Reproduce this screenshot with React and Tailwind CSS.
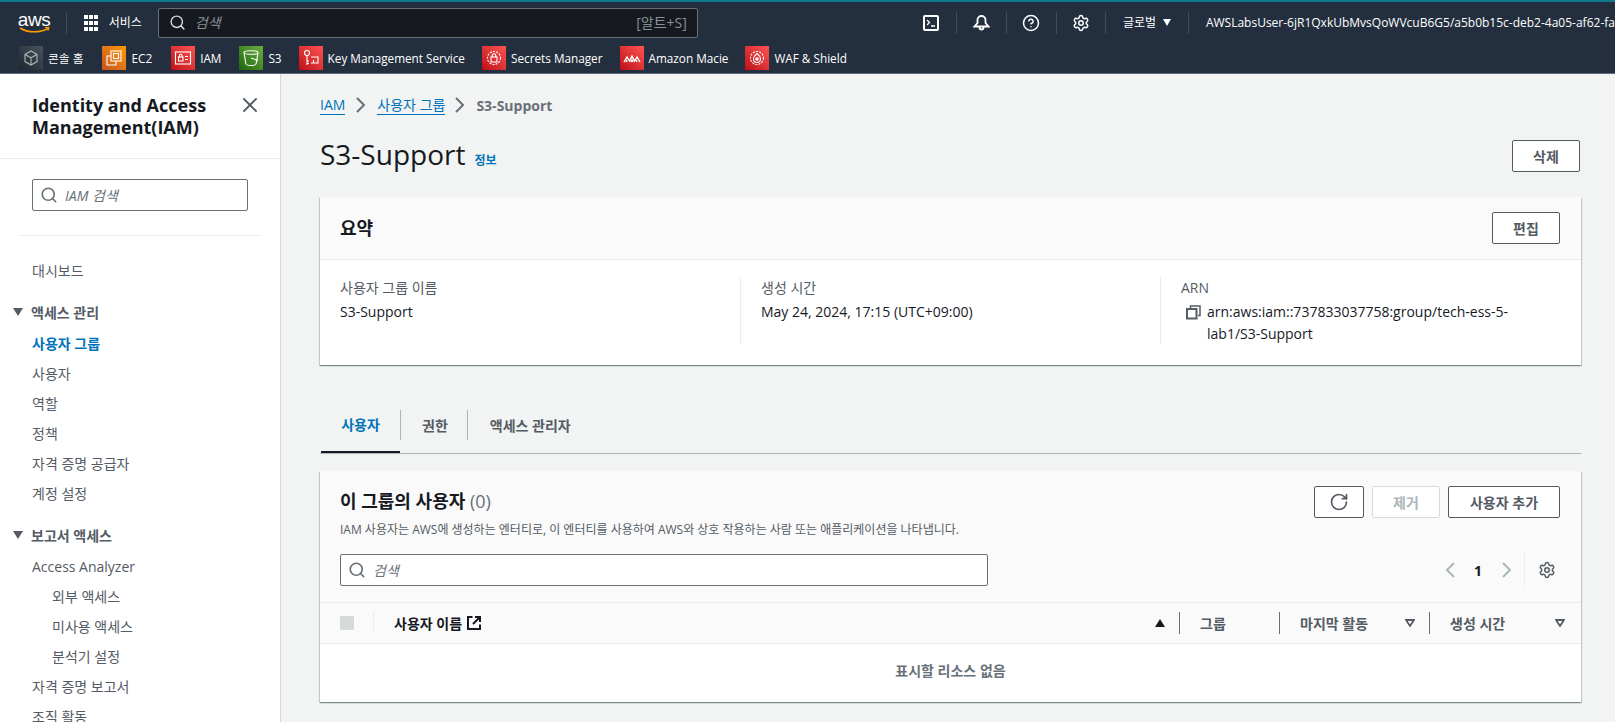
import React from "react";
import { Search, X, RotateCw, Settings, CircleHelp } from "lucide-react";

const FONT = "font-['Open_Sans','Noto_Sans_CJK_KR',sans-serif]";

const Box = ({ tile, children }) => (
  <span className={`flex h-6 w-6 shrink-0 items-center justify-center ${tile}`}>
    <svg width="20" height="20" viewBox="0 0 20 20" fill="none" stroke="white" strokeWidth="1.1">
      {children}
    </svg>
  </span>
);

const favorites = [
  {
    label: "콘솔 홈",
    gap: "mr-[19px]",
    tile: "bg-linear-to-tr from-[#20262e] to-[#4a525c]",
    icon: <path d="M10 3l6 3.4v7.2L10 17l-6-3.4V6.4L10 3zM4 6.4l6 3.4 6-3.4M10 9.8V17" stroke="#aab2bb" />,
  },
  {
    label: "EC2",
    gap: "mr-[19px]",
    tile: "bg-linear-to-tr from-[#c8511b] to-[#f90]",
    icon: (
      <>
        <rect x="7" y="3" width="10" height="10" />
        <rect x="9.5" y="5.5" width="5" height="5" />
        <path d="M7 8H3v9h9v-4" />
      </>
    ),
  },
  {
    label: "IAM",
    gap: "mr-[18px]",
    tile: "bg-linear-to-tr from-[#bd0816] to-[#ff5252]",
    icon: (
      <>
        <rect x="2.5" y="4" width="15" height="12" />
        <rect x="5.5" y="9" width="4.5" height="4" />
        <path d="M6.5 9V7.5a1.2 1.2 0 012.5 0V9M12 8.5h3M12 11.5h3" />
      </>
    ),
  },
  {
    label: "S3",
    gap: "mr-[17px]",
    tile: "bg-linear-to-tr from-[#1b660f] to-[#6cae3e]",
    icon: (
      <>
        <ellipse cx="10" cy="4.5" rx="7" ry="1.8" />
        <path d="M3 4.5l1.8 11c.2 1.2 2.5 2 5.2 2s5-.8 5.2-2L17 4.5M10 10l7 2.5" />
      </>
    ),
  },
  {
    label: "Key Management Service",
    gap: "mr-[17px]",
    tile: "bg-linear-to-tr from-[#bd0816] to-[#ff5252]",
    icon: (
      <>
        <circle cx="6" cy="5" r="2.5" />
        <path d="M6 7.5V17M6 13h2M6 15.5h2M10 9h7v6h-7M12.5 12v3" />
      </>
    ),
  },
  {
    label: "Secrets Manager",
    gap: "mr-[17px]",
    tile: "bg-linear-to-tr from-[#bd0816] to-[#ff5252]",
    icon: (
      <>
        <circle cx="10" cy="10" r="6.5" strokeDasharray="2 1.2" />
        <rect x="7" y="9" width="6" height="5" />
        <path d="M8.2 9V7.5a1.8 1.8 0 013.6 0V9" />
      </>
    ),
  },
  {
    label: "Amazon Macie",
    gap: "mr-[17px]",
    tile: "bg-linear-to-tr from-[#bd0816] to-[#ff5252]",
    icon: <path d="M2 14l3-5 2.5 4L10 8l2.5 5L15 9l3 5M4 14l1.2-2M9 14l1-2 1 2M15 14l-.8-2" strokeWidth="1.4" />,
  },
  {
    label: "WAF & Shield",
    gap: "",
    tile: "bg-linear-to-tr from-[#bd0816] to-[#ff5252]",
    icon: (
      <>
        <circle cx="10" cy="10" r="6.5" strokeDasharray="2 1.2" />
        <path d="M10 5.5c2.5 2 3.5 3.500 3.500 5.500a3.500 3.500 0 01-7 0c0-2 1-3.500 3.500-5.500z" />
        <circle cx="10" cy="11" r="1.2" fill="white" />
      </>
    ),
  },
];

const Chevron = ({ left, className = "" }) => (
  <svg className={className} width="10" height="16" viewBox="0 0 10 16" fill="none" stroke="currentColor" strokeWidth="2">
    <path d={left ? "M9 1L2 8l7 7" : "M1 1l7 7-7 7"} />
  </svg>
);

const TopBar = () => (
  <header className="h-[74px] shrink-0 border-t-2 border-b border-t-[#0f7a8c] border-b-[#5f6b7a] bg-[#232f3e] text-white">
    <div className="flex h-[41px] items-center">
      <div className="ml-[18px] flex w-[32px] flex-col items-center">
        <span className="text-[19px] leading-[15px] font-normal tracking-[-0.5px] font-['Liberation_Sans',sans-serif]">aws</span>
        <svg width="31" height="7" viewBox="0 0 31 7" fill="none">
          <path d="M1 1c8 5 20 5 28 .5" stroke="#f90" strokeWidth="1.6" />
          <path d="M26 .6l4-.4-1 3.400" stroke="#f90" strokeWidth="1.200" />
        </svg>
      </div>
      <span className="ml-[16px] h-[22px] w-px bg-[#414d5c]" />
      <div className="ml-[17px] grid grid-cols-3 gap-[2px]">
        {Array.from({ length: 9 }).map((_, i) => (
          <span key={i} className="h-1 w-1 bg-white" />
        ))}
      </div>
      <span className="ml-[12px] text-[12px] whitespace-nowrap">서비스</span>
      <div className="ml-[16px] flex h-[30px] w-[540px] shrink-0 items-center rounded-[2px] border border-[#687078] bg-[#16191f] pr-[10px] pl-[10px]">
        <Search size={17} strokeWidth={2} className="text-[#d5dbdb]" />
        <span className="ml-[9px] grow text-[14px] text-[#879196] italic">검색</span>
        <span className="text-[14px] text-[#879196]">[알트+S]</span>
      </div>
      <div className="ml-[225px] flex h-[16px] w-[16px] shrink-0 items-center justify-center rounded-[2px] border-2 border-white">
        <svg width="10" height="10" viewBox="0 0 10 10" fill="none" stroke="white" strokeWidth="1.300">
          <path d="M1 2l2.500 2.500L1 7M5 8h4" />
        </svg>
      </div>
      <span className="ml-[17px] h-[22px] w-px bg-[#414d5c]" />
      <svg className="ml-[16px] shrink-0" width="17" height="17" viewBox="0 0 17 17" fill="none" stroke="white" strokeWidth="1.800">
        <path d="M1.500 12.500h14L12.500 9V6a4 4 0 00-8 0v3l-3 3.500zM6.500 13.500a2 2 0 004 0" />
      </svg>
      <span className="ml-[16px] h-[22px] w-px bg-[#414d5c]" />
      <CircleHelp size={18} strokeWidth={2} className="ml-[16px] shrink-0" />
      <span className="ml-[16px] h-[22px] w-px bg-[#414d5c]" />
      <Settings size={18} strokeWidth={2} className="ml-[15px] shrink-0" />
      <span className="ml-[15px] h-[22px] w-px bg-[#414d5c]" />
      <span className="ml-[17px] text-[12px] whitespace-nowrap">글로벌</span>
      <span className="ml-[7px] h-0 w-0 border-x-[4.500px] border-t-[7px] border-x-transparent border-t-white" />
      <span className="ml-[17px] h-[22px] w-px bg-[#414d5c]" />
      <span className="ml-[17px] text-[12px] whitespace-nowrap">AWSLabsUser-6jR1QxkUbMvsQoWVcuB6G5/a5b0b15c-deb2-4a05-af62-fa</span>
    </div>
    <div className="flex h-[30px] items-start pt-[3px] pl-[19px]">
      {favorites.map((f) => (
        <div key={f.label} className={`flex items-center gap-[5px] ${f.gap}`}>
          <Box tile={f.tile}>{f.icon}</Box>
          <span className="text-[11.75px] leading-[23px] whitespace-nowrap">{f.label}</span>
        </div>
      ))}
    </div>
  </header>
);

const NavItem = ({ children, active, indent }) => (
  <div
    className={`h-[30px] text-[14px] leading-[30px] whitespace-nowrap ${indent ? "pl-[52px]" : "pl-[32px]"} ${
      active ? "font-bold text-[#0073bb]" : "text-[#545b64]"
    }`}
  >
    {children}
  </div>
);

const NavGroup = ({ children }) => (
  <div className="flex h-[32px] items-center pb-[2px] pl-[13px]">
    <span className="h-0 w-0 border-x-[5px] border-t-[8px] border-x-transparent border-t-[#545b64]" />
    <span className="ml-[8px] text-[14px] font-bold whitespace-nowrap text-[#545b64]">{children}</span>
  </div>
);

const Sidebar = () => (
  <aside className="w-[281px] shrink-0 overflow-hidden border-r border-[#d5dbdb] bg-white">
    <div className="flex h-[85px] items-start justify-between border-b border-[#eaeded] pt-[20px] pr-[18px] pl-[32px]">
      <h2 className="text-[18px] leading-[22px] font-bold text-[#16191f]">
        Identity and Access
        <br />
        Management(IAM)
      </h2>
      <X size={24} strokeWidth={1.800} className="-mt-[1px] text-[#545b64]" />
    </div>
    <div className="px-[32px] pt-[20px]">
      <div className="flex h-[32px] w-[216px] items-center rounded-[2px] border border-[#687078] pl-[7px]">
        <Search size={18} strokeWidth={2.200} className="text-[#687078]" />
        <span className="ml-[7px] text-[14px] text-[#687078] italic">IAM 검색</span>
      </div>
    </div>
    <div className="mx-[20px] mt-[24px] h-px bg-[#eaeded]" />
    <div className="mt-[20px]">
      <NavItem>대시보드</NavItem>
    </div>
    <div className="mt-[11px]">
      <NavGroup>액세스 관리</NavGroup>
      <NavItem active>사용자 그룹</NavItem>
      <NavItem>사용자</NavItem>
      <NavItem>역할</NavItem>
      <NavItem>정책</NavItem>
      <NavItem>자격 증명 공급자</NavItem>
      <NavItem>계정 설정</NavItem>
    </div>
    <div className="mt-[11px]">
      <NavGroup>보고서 액세스</NavGroup>
      <NavItem>Access Analyzer</NavItem>
      <NavItem indent>외부 액세스</NavItem>
      <NavItem indent>미사용 액세스</NavItem>
      <NavItem indent>분석기 설정</NavItem>
      <NavItem>자격 증명 보고서</NavItem>
      <NavItem>조직 활동</NavItem>
    </div>
  </aside>
);

const Button = ({ children, className = "" }) => (
  <button className={`flex h-[32px] items-center justify-center rounded-[2px] border border-[#545b64] bg-white text-[14px] font-bold text-[#545b64] ${className}`}>
    {children}
  </button>
);

const Crumb = ({ children }) => <span className="border-b border-[#0073bb] text-[14px] leading-[18px] text-[#0073bb]">{children}</span>;

const Field = ({ label, children, className = "" }) => (
  <div className={`h-[68px] ${className}`}>
    <div className="text-[14px] leading-[22px] text-[#545b64]">{label}</div>
    <div className="mt-[2px] text-[14px] leading-[22px] text-[#16191f]">{children}</div>
  </div>
);

const Summary = () => (
  <section className="mt-[25px] w-[1261px] bg-white shadow-[0_1px_1px_0_rgba(0,28,36,0.3),1px_1px_1px_0_rgba(0,28,36,0.15),-1px_1px_1px_0_rgba(0,28,36,0.15)]">
    <div className="flex h-[63px] items-center justify-between border-b border-[#eaeded] bg-[#fafafa] pr-[21px] pl-[20px]">
      <h2 className="text-[18px] font-bold text-[#16191f]">요약</h2>
      <Button className="w-[68px]">편집</Button>
    </div>
    <div className="grid h-[105px] grid-cols-[420px_420px_1fr] pt-[17px]">
      <Field label="사용자 그룹 이름" className="pl-[20px]">S3-Support</Field>
      <Field label="생성 시간" className="border-l border-[#eaeded] pl-[20px]">May 24, 2024, 17:15 (UTC+09:00)</Field>
      <Field label="ARN" className="border-l border-[#eaeded] pl-[20px]">
        <div className="flex items-start">
          <svg className="mt-[4px] ml-[5px] shrink-0" width="15" height="15" viewBox="0 0 15 15" fill="none" stroke="#545b64" strokeWidth="2">
            <rect x="1" y="4" width="9.500" height="9.500" />
            <path d="M4.500 3V1h9.500v9.500h-2" strokeWidth="1.500" />
          </svg>
          <span className="ml-[6px] w-[320px]">arn:aws:iam::737833037758:group/tech-ess-5-lab1/S3-Support</span>
        </div>
      </Field>
    </div>
  </section>
);

const Tabs = () => (
  <div className="mt-[44px] flex h-[45px] w-[1261px] items-start border-b border-[#aab7b8] text-[14px] font-bold">
    <div className="ml-px h-[44px] w-[79px] border-b-[2px] border-[#16191f] pt-[1px] text-center leading-[30px] text-[#0073bb]">사용자</div>
    <div className="mt-[1px] flex h-[30px] items-center border-l border-[#aab7b8] pr-[19px] pl-[21px] text-[#545b64]">권한</div>
    <div className="mt-[1px] flex h-[30px] items-center border-l border-[#aab7b8] px-[22px] text-[#545b64]">액세스 관리자</div>
  </div>
);

const SortDown = () => (
  <svg width="10" height="8" viewBox="0 0 10 8" fill="none" stroke="#545b64" strokeWidth="1.800">
    <path d="M1 1h8L5 7z" />
  </svg>
);

const UsersPanel = () => (
  <section className="mt-[17px] w-[1261px] bg-white shadow-[0_1px_1px_0_rgba(0,28,36,0.3),1px_1px_1px_0_rgba(0,28,36,0.15),-1px_1px_1px_0_rgba(0,28,36,0.15)]">
    <div className="h-[131px] bg-[#fafafa] pt-[15px] pr-[21px] pl-[20px]">
      <div className="flex items-start justify-between">
        <div>
          <h2 className="mt-[2px] text-[18px] leading-[26px] font-bold text-[#16191f]">
            이 그룹의 사용자 <span className="font-normal text-[#687078]">(0)</span>
          </h2>
          <p className="mt-[8px] text-[12px] leading-[16px] text-[#545b64]">
            IAM 사용자는 AWS에 생성하는 엔터티로, 이 엔터티를 사용하여 AWS와 상호 작용하는 사람 또는 애플리케이션을 나타냅니다.
          </p>
        </div>
        <div className="flex gap-[8px]">
          <Button className="w-[50px]">
            <RotateCw size={20} strokeWidth={2} />
          </Button>
          <button className="h-[32px] w-[68px] rounded-[2px] border border-[#d5dbdb] bg-white text-[14px] font-bold text-[#aab7b8]">제거</button>
          <Button className="w-[112px]">사용자 추가</Button>
        </div>
      </div>
      <div className="mt-[16px] flex items-center justify-between">
        <div className="flex h-[32px] w-[648px] items-center rounded-[2px] border border-[#687078] bg-white pl-[7px]">
          <Search size={18} strokeWidth={2.200} className="text-[#687078]" />
          <span className="ml-[7px] text-[14px] text-[#687078] italic">검색</span>
        </div>
        <div className="flex h-[32px] items-center text-[#aab7b8]">
          <Chevron left />
          <span className="mr-[20px] ml-[19px] text-[14px] font-bold text-[#16191f]">1</span>
          <Chevron />
          <span className="ml-[12px] h-[32px] w-px bg-[#eaeded]" />
          <Settings size={18} strokeWidth={2} className="mr-[4px] ml-[13px] text-[#545b64]" />
        </div>
      </div>
    </div>
    <div className="grid h-[42px] grid-cols-[1fr_100px_150px_152px] border-y border-[#eaeded] bg-[#fafafa] text-[14px] font-bold text-[#545b64]">
      <div className="flex items-center pl-[20px]">
        <span className="h-[14px] w-[14px] rounded-[1px] bg-[#d5dbdb]" />
        <span className="ml-[19px] h-[22px] w-px bg-[#eaeded]" />
        <span className="ml-[20px] text-[#16191f]">사용자 이름</span>
        <svg className="ml-[5px]" width="14" height="14" viewBox="0 0 14 14" fill="none" stroke="#16191f" strokeWidth="2">
          <path d="M5.500 1H1v12h12V8.500M8 1h5v5M13 1L6 8" />
        </svg>
        <span className="mr-[14px] ml-auto h-0 w-0 border-x-[5px] border-b-[8px] border-x-transparent border-b-[#16191f]" />
      </div>
      <div className="flex items-center">
        <div className="flex h-[22px] w-full items-center border-l border-[#687078] pl-[20px]">그룹</div>
      </div>
      <div className="flex items-center">
        <div className="flex h-[22px] w-full items-center justify-between border-l border-[#687078] pr-[14px] pl-[20px]">
          마지막 활동
          <SortDown />
        </div>
      </div>
      <div className="flex items-center">
        <div className="flex h-[22px] w-full items-center justify-between border-l border-[#687078] pr-[16px] pl-[20px]">
          생성 시간
          <SortDown />
        </div>
      </div>
    </div>
    <div className="flex h-[58px] items-center justify-center pb-[6px] text-[14px] font-bold text-[#687078]">표시할 리소스 없음</div>
  </section>
);

export default function App() {
  return (
    <div className={`flex h-[722px] w-[1615px] flex-col overflow-hidden bg-[#f2f3f3] ${FONT}`}>
      <TopBar />
      <div className="flex min-h-0 grow">
        <Sidebar />
        <main className="grow pl-[39px]">
          <nav className="mt-[21px] flex h-[20px] items-center">
            <Crumb>IAM</Crumb>
            <Chevron className="mx-[11px] text-[#687078]" />
            <Crumb>사용자 그룹</Crumb>
            <Chevron className="mx-[10px] text-[#687078]" />
            <span className="ml-[1px] text-[14px] font-bold text-[#687078]">S3-Support</span>
          </nav>
          <div className="mt-[25px] flex h-[32px] w-[1260px] items-start justify-between">
            <div className="flex items-baseline">
              <h1 className="text-[28px] leading-[28px] font-normal text-[#16191f]">S3-Support</h1>
              <span className="ml-[9px] text-[12px] font-bold text-[#0073bb]">정보</span>
            </div>
            <Button className="w-[68px]">삭제</Button>
          </div>
          <Summary />
          <Tabs />
          <UsersPanel />
        </main>
      </div>
    </div>
  );
}
